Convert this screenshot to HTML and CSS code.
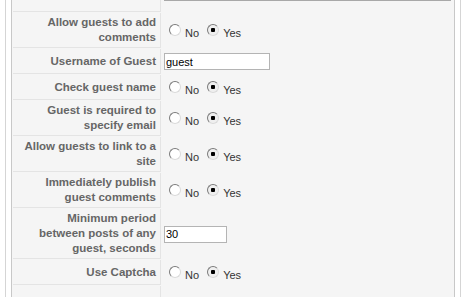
FILE: index.html
```html
<!DOCTYPE html>
<html lang="en">
<head>
  <meta charset="UTF-8" />
  <title>Comment Parameters</title>
  <link rel="stylesheet" href="styles.css">
</head>
<body>
<div class="outer">
  <div class="panel">
    <table class="paramlist">
      <tr class="tail">
        <td class="key"></td>
        <td class="value"><div class="textarea-end"></div></td>
      </tr>
      <tr>
        <td class="key">Allow guests to add comments</td>
        <td class="value">
          <input type="radio" name="allow_guests" id="allow_guests0"><label for="allow_guests0">No</label>
          <input type="radio" name="allow_guests" id="allow_guests1" checked><label for="allow_guests1">Yes</label>
        </td>
      </tr>
      <tr>
        <td class="key">Username of Guest</td>
        <td class="value"><input type="text" class="text" value="guest"></td>
      </tr>
      <tr>
        <td class="key">Check guest name</td>
        <td class="value">
          <input type="radio" name="check_name" id="check_name0"><label for="check_name0">No</label>
          <input type="radio" name="check_name" id="check_name1" checked><label for="check_name1">Yes</label>
        </td>
      </tr>
      <tr>
        <td class="key">Guest is required to specify email</td>
        <td class="value">
          <input type="radio" name="need_email" id="need_email0"><label for="need_email0">No</label>
          <input type="radio" name="need_email" id="need_email1" checked><label for="need_email1">Yes</label>
        </td>
      </tr>
      <tr>
        <td class="key">Allow guests to link to a site</td>
        <td class="value">
          <input type="radio" name="guest_link" id="guest_link0"><label for="guest_link0">No</label>
          <input type="radio" name="guest_link" id="guest_link1" checked><label for="guest_link1">Yes</label>
        </td>
      </tr>
      <tr>
        <td class="key">Immediately publish guest comments</td>
        <td class="value">
          <input type="radio" name="autopublish" id="autopublish0"><label for="autopublish0">No</label>
          <input type="radio" name="autopublish" id="autopublish1" checked><label for="autopublish1">Yes</label>
        </td>
      </tr>
      <tr>
        <td class="key">Minimum period between posts of any guest, seconds</td>
        <td class="value"><input type="text" class="text short" value="30"></td>
      </tr>
      <tr>
        <td class="key">Use Captcha</td>
        <td class="value">
          <input type="radio" name="captcha" id="captcha0"><label for="captcha0">No</label>
          <input type="radio" name="captcha" id="captcha1" checked><label for="captcha1">Yes</label>
        </td>
      </tr>
      <tr class="empty">
        <td class="key"></td>
        <td class="value"></td>
      </tr>
    </table>
  </div>
</div>
</body>
</html>
```

FILE: styles.css
```css
* { box-sizing: border-box; }
body {
  margin: 0;
  background: #fff;
  font-family: "Liberation Sans", Arial, sans-serif;
  font-size: 11px;
  line-height: 15px;
  color: #333;
  overflow: hidden;
}
.outer {
  margin: 0 5px;
  padding: 0 5px;
  border-left: 1px solid #d5d5d5;
  border-right: 1px solid #d5d5d5;
  background: #fff;
}
.panel {
  border-left: 1px solid #c8c8c8;
  border-right: 1px solid #c8c8c8;
  background: #f5f5f5;
}
.paramlist {
  width: 100%;
  margin-top: -2px;
  border-spacing: 1px;
}
.paramlist tr { height: 25px; }
.paramlist td { padding: 2px; }
.paramlist td.key {
  width: 148px;
  padding: 2px 4px 2px 7px;
  text-align: right;
  font-size: 11.5px;
  font-weight: bold;
  color: #666;
  border-bottom: 1px solid #e4e4e4;
  border-right: 1px solid #e4e4e4;
}
.paramlist tr.tail { height: 13px; }
.paramlist tr.tail td.value { padding: 0; vertical-align: top; }
.paramlist tr.empty { height: 40px; }
.textarea-end {
  height: 2px;
  margin: 0 2px;
  background: #a8a8a8;
}
.value input[type=radio] {
  appearance: none;
  width: 12px;
  height: 12px;
  margin: 3px 4px 1px 5px;
  border: 1px solid #8a8a8a;
  border-color: #7a7a7a #dadada #dadada #7a7a7a;
  border-radius: 50%;
  background: #fff;
}
.value input[type=radio]:checked {
  background: radial-gradient(circle, #000 0 2px, #efefef 2.5px);
}
.value label { color: #333; }
.text {
  width: 106px;
  height: 17px;
  margin: 0;
  padding: 0 1px;
  border: 1px solid #b4b4b4;
  background: #fff;
  font-family: "Liberation Sans", Arial, sans-serif;
  font-size: 11px;
  color: #000;
  vertical-align: middle;
}
.text.short { width: 63px; }
```
